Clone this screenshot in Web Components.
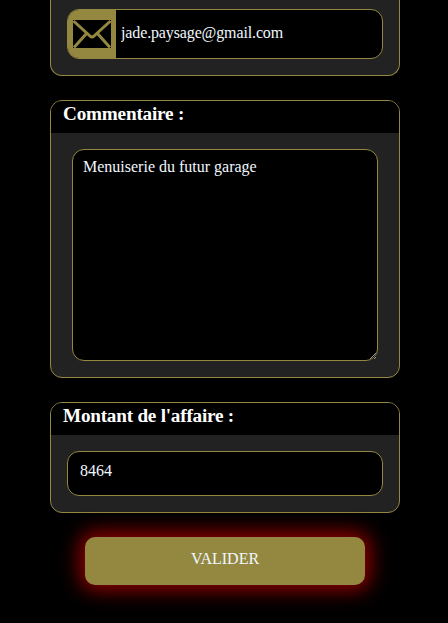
<!DOCTYPE html>
<html lang="fr">
<head>
<meta charset="utf-8">
<title>Affaire</title>
<style>
  html, body { margin: 0; background: #000; height: 100%; overflow: hidden; }
  body {
    box-sizing: border-box;
    padding-left: 2px;
    font-family: "Liberation Serif", "Times New Roman", serif;
    color: #f0f8ff;
    display: flex;
    flex-direction: column;
    align-items: center;
  }
</style>
</head>
<body>
  <form-card cut style="--body-pad: 9px 16px 16px 16px">
    <text-field value="jade.paysage@gmail.com" type="email" spacing="-0.13">
      <svg slot="icon" viewBox="0 0 48 48" width="48" height="48" aria-hidden="true">
        <rect x="5" y="10" width="38" height="28" fill="#000"/>
        <path d="M5.5 11 L22 26 Q24 28 26 26 L42.5 11 M6 37.5 L18.5 23.5 M42 37.5 L29.5 23.5" fill="none" stroke="#948840" stroke-width="3"/>
      </svg>
    </text-field>
  </form-card>

  <form-card style="--card-gap: 24px; --body-pad: 16px 21px 16px 21px">
    <span slot="title" style="letter-spacing: -0.2px">Commentaire :</span>
    <note-area>Menuiserie du futur garage</note-area>
  </form-card>

  <form-card style="--card-gap: 24px; --body-pad: 16px 16px 16px 16px">
    <span slot="title" style="letter-spacing: -0.23px">Montant de l'affaire :</span>
    <text-field value="8464" pad="12" style="height: 45px" lift="6"></text-field>
  </form-card>

  <submit-button>VALIDER</submit-button>

<script>
class FormCard extends HTMLElement {
  constructor() {
    super();
    this.attachShadow({ mode: 'open' });
    this.shadowRoot.innerHTML = `
      <style>
        :host {
          display: block;
          box-sizing: border-box;
          width: 350px;
          margin-top: var(--card-gap, 0);
          border: 1px solid #948840;
          border-radius: 12px;
          background: #222;
          overflow: hidden;
          flex: none;
        }
        :host([cut]) {
          border-top: none;
          border-top-left-radius: 0;
          border-top-right-radius: 0;
        }
        .title {
          background: #000;
          height: 32px;
          padding-left: 12px;
          font-size: 19.2px;
          font-weight: bold;
          line-height: 26px;
          color: #fff;
        }
        :host([cut]) .title { display: none; }
        .body { padding: var(--body-pad, 16px); }
      </style>
      <div class="title"><slot name="title"></slot></div>
      <div class="body"><slot></slot></div>
    `;
  }
}

class TextField extends HTMLElement {
  constructor() {
    super();
    this.attachShadow({ mode: 'open' });
    this.shadowRoot.innerHTML = `
      <style>
        :host {
          display: flex;
          box-sizing: border-box;
          height: 50px;
          border: 1px solid #948840;
          border-radius: 12px;
          background: #000;
          overflow: hidden;
        }
        .icon {
          display: flex;
          align-items: center;
          justify-content: center;
          width: 48px;
          background: #948840;
          flex: none;
        }
        .icon.empty { display: none; }
        input {
          flex: 1;
          min-width: 0;
          border: none;
          outline: none;
          background: transparent;
          color: #f0f8ff;
          font: 16px "Liberation Serif", "Times New Roman", serif;
          padding: 0 5px 2px 5px;
        }
      </style>
      <div class="icon"><slot name="icon"></slot></div>
      <input>
    `;
  }

  connectedCallback() {
    const input = this.shadowRoot.querySelector('input');
    input.type = this.getAttribute('type') || 'text';
    input.setAttribute('value', this.getAttribute('value') || '');
    if (this.hasAttribute('pad')) input.style.paddingLeft = this.getAttribute('pad') + 'px';
    if (this.hasAttribute('lift')) input.style.paddingBottom = this.getAttribute('lift') + 'px';
    if (this.hasAttribute('spacing')) input.style.letterSpacing = this.getAttribute('spacing') + 'px';
    if (!this.querySelector('[slot=icon]')) this.shadowRoot.querySelector('.icon').classList.add('empty');
  }
}

class NoteArea extends HTMLElement {
  constructor() {
    super();
    this.attachShadow({ mode: 'open' });
    this.shadowRoot.innerHTML = `
      <style>
        :host { display: block; height: 212px; }
        textarea {
          display: block;
          box-sizing: border-box;
          width: 100%;
          height: 100%;
          padding: 8px 10px;
          border: 1px solid #948840;
          border-radius: 12px;
          outline: none;
          background: #000;
          color: #f0f8ff;
          font: 16px "Liberation Serif", "Times New Roman", serif;
        }
      </style>
      <textarea></textarea>
    `;
  }

  connectedCallback() {
    this.shadowRoot.querySelector('textarea').textContent = this.textContent.trim();
  }
}

class SubmitButton extends HTMLElement {
  constructor() {
    super();
    this.attachShadow({ mode: 'open' });
    this.shadowRoot.innerHTML = `
      <style>
        :host { display: block; margin-top: 24px; flex: none; }
        button {
          display: block;
          width: 280px;
          height: 48px;
          padding: 0 0 4px;
          border: none;
          border-radius: 10px;
          background: #948840;
          color: #f0f8ff;
          font: 16px "Liberation Serif", "Times New Roman", serif;
          box-shadow: 0 0 20px 5px #960000;
        }
      </style>
      <button type="button"><slot></slot></button>
    `;
  }
}

customElements.define('form-card', FormCard);
customElements.define('text-field', TextField);
customElements.define('note-area', NoteArea);
customElements.define('submit-button', SubmitButton);
</script>
</body>
</html>
